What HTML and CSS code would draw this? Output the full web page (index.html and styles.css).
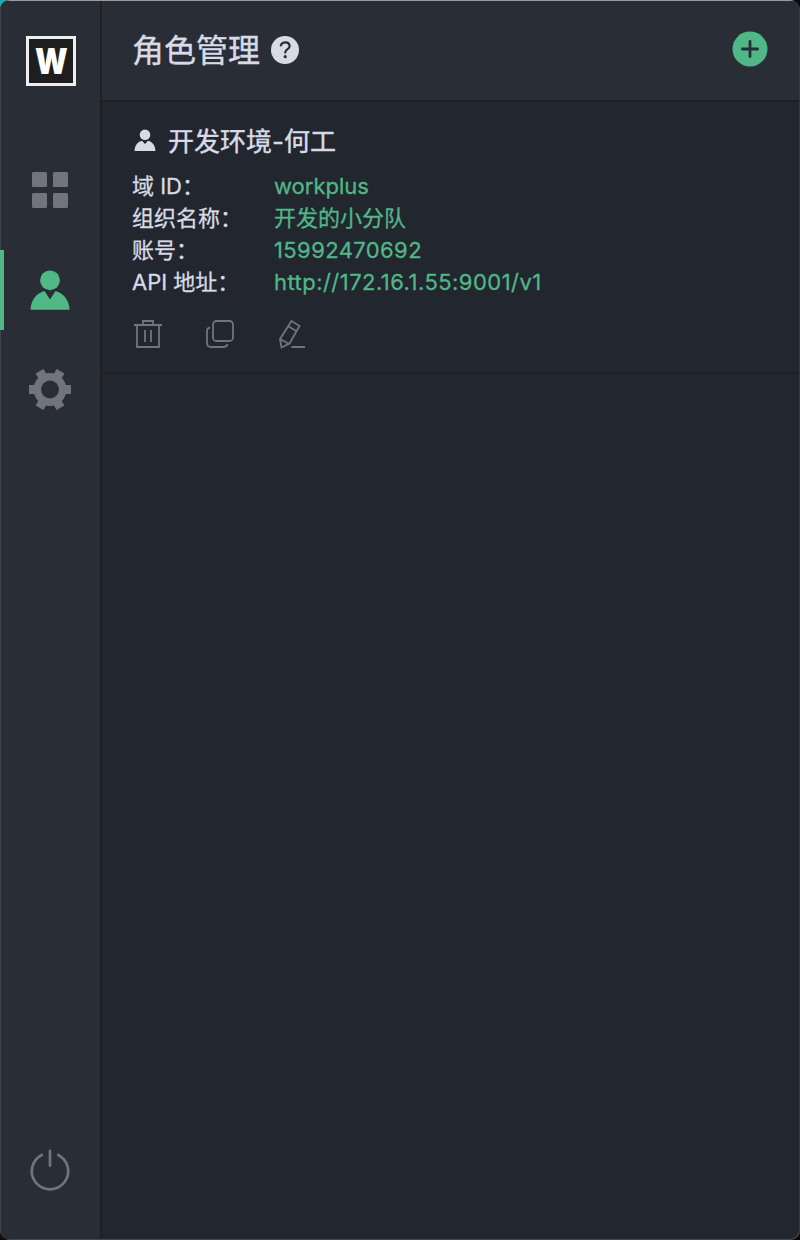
FILE: index.html
```html
<!DOCTYPE html>
<html lang="zh-CN">
<head>
<meta charset="utf-8">
<title>角色管理</title>
<link rel="stylesheet" href="styles.css">
</head>
<body>
<div class="window">
  <nav class="sidebar">
    <div class="logo"><span class="logo-letter">W</span></div>
    <a class="nav-item nav-first"><svg width="44" height="44" viewBox="0 0 44 44" fill="#71747c"><rect x="4" y="4" width="15" height="15" rx="1.500"/><rect x="25" y="4" width="15" height="15" rx="1.500"/><rect x="4" y="25" width="15" height="15" rx="1.500"/><rect x="25" y="25" width="15" height="15" rx="1.500"/></svg></a>
    <a class="nav-item active"><svg width="44" height="44" viewBox="0 0 44 44" fill="#50b787"><circle cx="22" cy="12.300" r="9.900"/><path d="M2.500 41.800C3 32 8.500 25 16.500 23L22 31.500L27.500 23C35.500 25 41 32 41.600 41.800Z"/></svg></a>
    <a class="nav-item"><svg width="44" height="44" viewBox="0 0 44 44"><g fill="#71747c"><circle cx="22" cy="21.500" r="16.500"/><path id="tooth" d="M1 17H43V26H1Z"/><use href="#tooth" transform="rotate(60 22 21.500)"/><use href="#tooth" transform="rotate(120 22 21.500)"/></g><circle cx="22" cy="21.500" r="9" fill="#292d36"/></svg></a>
    <a class="power"><svg width="44" height="44" viewBox="0 0 44 44" fill="none" stroke="#71747c" stroke-width="2.700"><path d="M14.800 5.400A18.200 18.200 0 1 0 29.200 5.400"/><path d="M22 1.800V16.800" stroke-linecap="round"/></svg></a>
  </nav>
  <main class="content">
    <header class="header">
      <h1 class="title">角色管理</h1>
      <svg class="help" width="28" height="28" viewBox="0 0 28 28"><circle cx="14" cy="14" r="14" fill="#d8dbe5"/><path d="M9.800 9.400C10.800 7 12.300 6.400 14.200 6.400C16.800 6.400 18.600 7.900 18.600 10.200C18.600 13.300 14.200 13 14.200 16.600" fill="none" stroke="#292d36" stroke-width="2.200" stroke-linecap="round"/><circle cx="14.200" cy="20.700" r="1.600" fill="#292d36"/></svg>
      <svg class="add" width="36" height="36" viewBox="0 0 36 36"><circle cx="18" cy="18" r="17.500" fill="#50b787"/><path d="M18 10.400V25.600M10.400 18H25.600" stroke="#292d36" stroke-width="2.800" stroke-linecap="round"/></svg>
    </header>
    <section class="role">
      <div class="role-head">
        <svg width="24" height="24" viewBox="0 0 24 24" fill="#d8dbe5"><circle cx="12" cy="6.700" r="5.300"/><path d="M1.500 23C1.800 17.500 4.500 13.800 9 12.800L12 16L15 12.800C19.500 13.800 22.200 17.500 22.500 23Z"/></svg>
        <h2 class="role-name">开发环境-何工</h2>
      </div>
      <dl class="fields">
        <dt>域 ID：</dt><dd>workplus</dd>
        <dt>组织名称：</dt><dd>开发的小分队</dd>
        <dt>账号：</dt><dd class="account">15992470692</dd>
        <dt>API 地址：</dt><dd class="url">http://172.16.1.55:9001/v1</dd>
      </dl>
      <div class="actions">
        <svg width="32" height="32" viewBox="0 0 32 32"><path d="M2 7H30M5 7V29H27V7M11 6V3H21V6M13 12V24M19 12V24"/></svg>
        <svg width="32" height="32" viewBox="0 0 32 32"><rect x="9" y="3" width="20" height="20" rx="3.500"/><path d="M6 9.500Q3 10 3 13V25Q3 29 7 29H19Q23 29 23.500 26"/></svg>
        <svg width="32" height="32" viewBox="0 0 32 32"><path d="M15.500 3L23.500 8L13.500 25.500L5.500 29.500L4 21ZM12.300 8.300L20.500 13.300M4 21L13 26M15.500 29H29"/></svg>
      </div>
    </section>
  </main>
</div>
</body>
</html>
```
FILE: styles.css
```css
* { box-sizing: border-box; }
html { background: linear-gradient(to right, #20a5b3 50%, #08090b 50%) top / 100% 50% no-repeat #0c0c0f; }
body { margin: 0; font-family: Inter, "Noto Sans CJK SC", sans-serif; }
svg { display: block; flex: none; }
.window {
  display: flex;
  width: 800px;
  height: 1240px;
  overflow: hidden;
  background: #22262e;
  border-radius: 10px;
  box-shadow: inset 0 0 0 1px #4a4c52;
}
.sidebar {
  display: flex;
  flex-direction: column;
  align-items: center;
  flex: none;
  width: 102px;
  padding-right: 2px;
  background: #292d36;
  border-top: 1px solid #999b9f;
  border-bottom: 1px solid #44474d;
  box-shadow: inset 1px 0 #40434a, inset -2px 0 #1e2024;
}
.logo {
  display: flex;
  align-items: center;
  justify-content: center;
  width: 50px;
  height: 50px;
  margin: 35px 0 0 2px;
  background: #1e1e1e;
  border: 3px solid #eceeef;
}
.logo-letter {
  font-size: 36px;
  font-weight: 900;
  line-height: 44px;
  color: #fff;
  transform: scaleX(0.84);
}
.nav-item {
  display: flex;
  align-items: center;
  justify-content: center;
  width: 100px;
  height: 80px;
  margin-bottom: 20px;
}
.nav-first { margin-top: 64px; }
.active { box-shadow: inset 4px 0 #50b787; }
.power { margin: auto 0 46px; }
.content {
  flex: 1;
  border-top: 1px solid #999b9f;
  border-bottom: 1px solid #44474d;
  border-right: 1px solid #34373e;
}
.header {
  display: flex;
  align-items: center;
  height: 101px;
  padding: 0 31px 4px 30px;
  background: #292d36;
  border-bottom: 2px solid #1e2024;
}
.title {
  margin: 0;
  padding-top: 4px;
  font-size: 32px;
  font-weight: 400;
  line-height: 48px;
  color: #d8dbe5;
  -webkit-text-stroke: 0.4px;
}
.help { margin: 3px 0 0 11px; }
.add { margin-left: auto; }
.role {
  height: 272px;
  padding: 22px 30px 0;
  border-bottom: 2px solid #1e2024;
}
.role-head {
  display: flex;
  align-items: center;
  gap: 11px;
  height: 32px;
  padding-left: 1px;
}
.role-name {
  margin: 0;
  padding-top: 3px;
  font-size: 26px;
  font-weight: 400;
  line-height: 32px;
  color: #d8dbe5;
  -webkit-text-stroke: 0.4px;
}
.fields {
  display: grid;
  grid-template-columns: 142px 1fr;
  grid-auto-rows: 32px;
  margin: 14px 0 0;
  font-size: 22px;
  line-height: 32px;
  color: #d8dbe5;
  -webkit-text-stroke: 0.3px;
}
.fields dd { margin: 0; color: #50b787; }
.fields .account { letter-spacing: 0.4px; }
.fields .url { letter-spacing: 0.46px; }
.actions {
  display: flex;
  gap: 40px;
  margin-top: 20px;
}
.actions svg {
  fill: none;
  stroke: #71747c;
  stroke-width: 1.8;
}
```
